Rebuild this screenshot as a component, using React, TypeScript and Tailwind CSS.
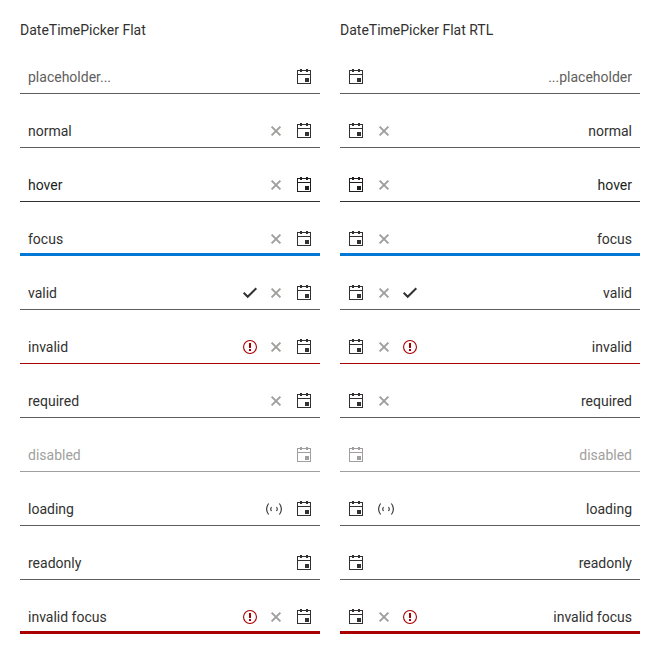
import React from 'react';

type IconName = 'clear' | 'valid' | 'error' | 'loading';
type Variant = 'normal' | 'placeholder' | 'hover' | 'focus' | 'invalid' | 'disabled' | 'invalidFocus';

interface Field {
  text: string;
  variant: Variant;
  icons: IconName[];
}

const fields: Field[] = [
  { text: 'placeholder...', variant: 'placeholder', icons: [] },
  { text: 'normal', variant: 'normal', icons: ['clear'] },
  { text: 'hover', variant: 'hover', icons: ['clear'] },
  { text: 'focus', variant: 'focus', icons: ['clear'] },
  { text: 'valid', variant: 'normal', icons: ['valid', 'clear'] },
  { text: 'invalid', variant: 'invalid', icons: ['error', 'clear'] },
  { text: 'required', variant: 'normal', icons: ['clear'] },
  { text: 'disabled', variant: 'disabled', icons: [] },
  { text: 'loading', variant: 'normal', icons: ['loading'] },
  { text: 'readonly', variant: 'normal', icons: [] },
  { text: 'invalid focus', variant: 'invalidFocus', icons: ['error', 'clear'] },
];

const borderStyles: Record<Variant, string> = {
  normal: 'border-b border-[#605e5c]',
  placeholder: 'border-b border-[#605e5c]',
  hover: 'border-b border-[#323130]',
  focus: 'border-b-3 border-[#0078d4]',
  invalid: 'border-b border-[#a80000]',
  disabled: 'border-b border-[#a19f9d]',
  invalidFocus: 'border-b-3 border-[#a80000]',
};

const textStyles: Record<Variant, string> = {
  normal: 'text-[#323130]',
  placeholder: 'text-[#605e5c]',
  hover: 'text-[#201f1e]',
  focus: 'text-[#323130]',
  invalid: 'text-[#323130]',
  disabled: 'text-[#a19f9d]',
  invalidFocus: 'text-[#323130]',
};

function CalendarIcon() {
  return (
    <svg className="block size-4" viewBox="0 0 16 16" fill="currentColor" shapeRendering="crispEdges">
      <path fillRule="evenodd" d="M1 1h14v14H1zM2 2v3h12V2zM2 6v8h12V6z" />
      <path d="M4 0h2v3H4zM10 0h2v3h-2zM9 9h4v4H9z" />
    </svg>
  );
}

function StateIcon({ name }: { name: IconName }) {
  if (name === 'clear') {
    return (
      <svg className="block size-4 text-[#a19f9d]" viewBox="0 0 16 16" fill="none" stroke="currentColor" strokeWidth="2">
        <path d="M3.6 3.6l8.8 8.8M12.4 3.6l-8.8 8.8" />
      </svg>
    );
  }
  if (name === 'valid') {
    return (
      <svg className="block size-4 text-[#323130]" viewBox="0 0 16 16" fill="none" stroke="currentColor" strokeWidth="2">
        <path d="M1.7 7.8l4 4L14.3 3.2" />
      </svg>
    );
  }
  if (name === 'error') {
    return (
      <svg className="block size-4 text-[#a80000]" viewBox="0 0 16 16" fill="currentColor">
        <circle cx="8" cy="8" r="6.45" fill="none" stroke="currentColor" strokeWidth="1.1" />
        <path d="M7 4h2v5H7zM7 10h2v2H7z" />
      </svg>
    );
  }
  return (
    <svg className="block size-4 text-[#323130]" viewBox="0 0 16 16" fill="none" stroke="currentColor" strokeWidth="1.1">
      <path d="M2.6 2.5Q-1.4 8 2.6 13.5M13.4 2.5Q17.4 8 13.4 13.5" />
      <path d="M5.5 6Q4 8 5.5 10M10.5 6Q12 8 10.5 10" />
    </svg>
  );
}

function DateTimeField({ field }: { field: Field }) {
  const disabled = field.variant === 'disabled';
  return (
    <div className={`flex h-9 items-start ${borderStyles[field.variant]}`}>
      <div className={`min-w-0 flex-1 px-2 pt-[9px] leading-5 ${textStyles[field.variant]}`}>{field.text}</div>
      <div className="flex gap-2.5 pt-[11px]">
        {field.icons.map((name) => (
          <StateIcon key={name} name={name} />
        ))}
      </div>
      <div
        className={`pt-[11px] pe-2 ${field.icons.includes('loading') ? 'ps-3.5' : 'ps-3'} ${
          disabled ? 'text-[#a19f9d]' : field.variant === 'hover' ? 'text-[#201f1e]' : 'text-[#323130]'
        }`}
      >
        <CalendarIcon />
      </div>
    </div>
  );
}

function Column({ title, rtl = false }: { title: string; rtl?: boolean }) {
  return (
    <section className="w-[300px]">
      <h2 className="mb-[18px] leading-5">{title}</h2>
      <div dir={rtl ? 'rtl' : 'ltr'} className="flex flex-col gap-[18px]">
        {fields.map((field) => (
          <DateTimeField key={field.text} field={field} />
        ))}
      </div>
    </section>
  );
}

export default function App() {
  return (
    <main className="flex h-[654px] w-[660px] gap-5 overflow-hidden bg-white p-5 font-['Roboto',sans-serif] text-sm text-[#323130]">
      <Column title="DateTimePicker Flat" />
      <Column title="DateTimePicker Flat RTL" rtl />
    </main>
  );
}
